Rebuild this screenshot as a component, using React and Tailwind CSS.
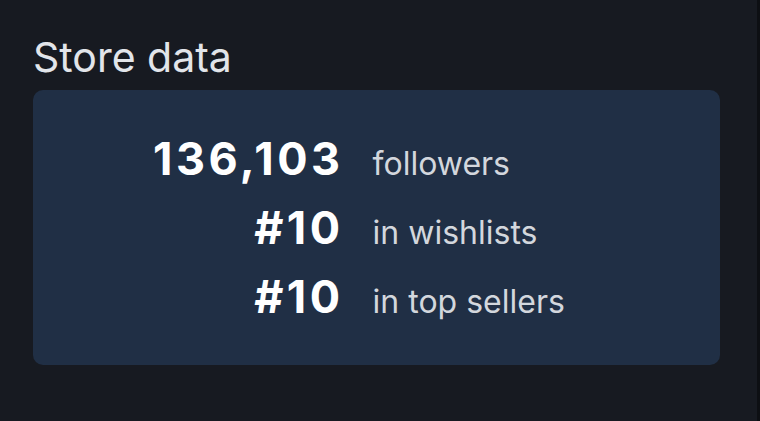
const STATS = [
  { value: '136,103', label: 'followers' },
  { value: '#10', label: 'in wishlists' },
  { value: '#10', label: 'in top sellers' },
]

export default function App() {
  return (
    <div className="flex h-[421px] w-[760px] bg-[#171a21] font-['Inter','Noto_Sans',sans-serif]">
      <div className="flex-1 pl-[33px] pr-[37px] pt-[37px]">
        {/* Title */}
        <h2 className="text-[41px] leading-none text-[#e2e5ea]">Store data</h2>

        {/* Card */}
        <div className="mt-[12px] h-[275px] rounded-[10px] bg-[#202f45] pl-[120px] pt-[46px]">
          <div className="grid grid-cols-[auto_auto] justify-start gap-x-[29px] gap-y-[24px] items-baseline">
            {STATS.map(s => (
              <div key={s.label} className="contents">
                <div className="text-right text-[45px] font-bold leading-none tracking-[3.5px] text-white">{s.value}</div>
                <div className="text-[32px] leading-none text-[#d3d7dd]">{s.label}</div>
              </div>
            ))}
          </div>
        </div>
      </div>
      <div className="w-[3px] bg-[#0d0f13]" />
    </div>
  )
}
